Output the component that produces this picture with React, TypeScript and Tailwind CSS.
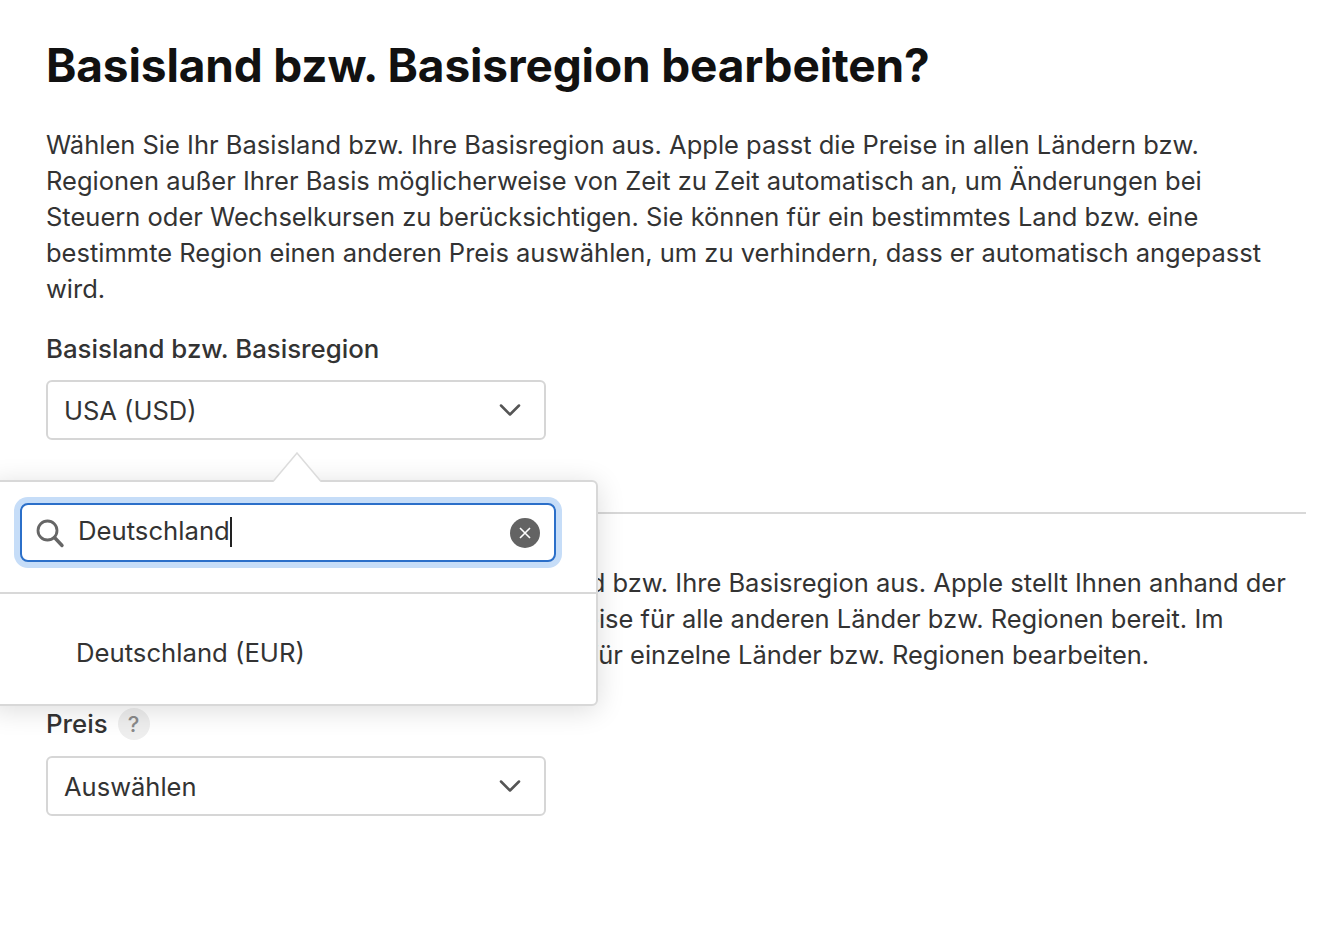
import { ChevronDown } from 'lucide-react';

function SelectBox({ value }: { value: string }) {
  return (
    <div className="flex h-[60px] w-[500px] items-center justify-between rounded-[6px] border-2 border-[#d6d6d6] bg-white pl-[16px] pr-[16px]">
      <span className="pt-[2px] text-[#333333]">{value}</span>
      <ChevronDown size={36} strokeWidth={1.7} className="text-[#555555]" />
    </div>
  );
}

function CountryPopover() {
  return (
    <div className="absolute left-[-10px] top-[480px] h-[226px] w-[608px] rounded-[6px] border-2 border-[#d8d8d8] bg-white text-[25.7px] shadow-[0_4px_28px_rgba(0,0,0,0.14)]">
      {/* Pfeil nach oben */}
      <svg
        width="60"
        height="30"
        viewBox="0 0 60 30"
        className="absolute left-[275px] top-[-30px]"
      >
        <path d="M6 30 L30 1 L54 30 Z" fill="#ffffff" />
        <path d="M6 29.5 L30 1 L54 29.5" fill="none" stroke="#dcdcdc" strokeWidth="1.5" />
      </svg>

      <div className="ml-[28px] mt-[21px] flex h-[59px] w-[536px] items-center rounded-[8px] border-2 border-[#2b6fc9] bg-white pl-[13px] pr-[14px] shadow-[0_0_0_6px_#c6ddf8]">
        <svg width="30" height="30" viewBox="0 0 30 30" fill="none" className="shrink-0">
          <circle cx="12.5" cy="12.5" r="9.5" stroke="#666666" strokeWidth="2.8" />
          <path d="M19.5 19.5 L27 27.5" stroke="#666666" strokeWidth="3.4" strokeLinecap="round" />
        </svg>
        <span className="ml-[13px] pb-[3px] text-[#333333]">Deutschland</span>
        <span className="mb-[1px] h-[30px] w-[2px] bg-[#222222]" />
        <span className="ml-auto flex h-[30px] w-[30px] items-center justify-center rounded-full bg-[#636363]">
          <svg width="14" height="14" viewBox="0 0 14 14" fill="none">
            <path d="M2 2 L12 12 M12 2 L2 12" stroke="#ffffff" strokeWidth="1.6" />
          </svg>
        </span>
      </div>

      <div className="mt-[30px] border-t-2 border-[#d8d8d8]" />
      <div className="ml-[84px] mt-[41px] text-[#333333]">Deutschland (EUR)</div>
    </div>
  );
}

export default function App() {
  return (
    <div className="relative h-[950px] w-[1344px] overflow-hidden bg-white font-['Inter',sans-serif] text-[25.5px] leading-[36px] text-[#333333]">
      <div className="pl-[46px] pr-[38px] pt-[36px]">
        <h1 className="text-[46px] font-bold leading-[58px] tracking-[-0.15px] text-[#111111]">
          Basisland bzw. Basisregion bearbeiten?
        </h1>
        <p className="mt-[33px]">
          Wählen Sie Ihr Basisland bzw. Ihre Basisregion aus. Apple passt die Preise in allen Ländern bzw.
          <br />
          Regionen außer Ihrer Basis möglicherweise von Zeit zu Zeit automatisch an, um Änderungen bei
          <br />
          Steuern oder Wechselkursen zu berücksichtigen. Sie können für ein bestimmtes Land bzw. eine
          <br />
          bestimmte Region einen anderen Preis auswählen, um zu verhindern, dass er automatisch angepasst
          <br />
          wird.
        </p>
        <div className="mt-[24px] text-[25.8px] font-medium">Basisland bzw. Basisregion</div>
        <div className="mt-[13px]">
          <SelectBox value="USA (USD)" />
        </div>

        <div className="mt-[72px] border-t-2 border-[#d8d8d8]" />
        <p className="mt-[51px]">
          Wählen Sie zuerst einen Preis für Ihr Basisland bzw. Ihre Basisregion aus. Apple stellt Ihnen anhand der
          <br />
          Basisregion automatisch alle angepassten Preise für alle anderen Länder bzw. Regionen bereit. Im
          <br />
          Anschluss können Sie die Preise auch selbst für einzelne Länder bzw. Regionen bearbeiten.
        </p>

        <div className="mt-[33px] flex items-center gap-[10px]">
          <span className="text-[25.8px] font-medium">Preis</span>
          <span className="flex h-[32px] w-[32px] items-center justify-center rounded-full bg-[#eeeeee] text-[22px] font-medium text-[#8a8a8a]">
            ?
          </span>
        </div>
        <div className="mt-[14px]">
          <SelectBox value="Auswählen" />
        </div>
      </div>

      <CountryPopover />
    </div>
  );
}
